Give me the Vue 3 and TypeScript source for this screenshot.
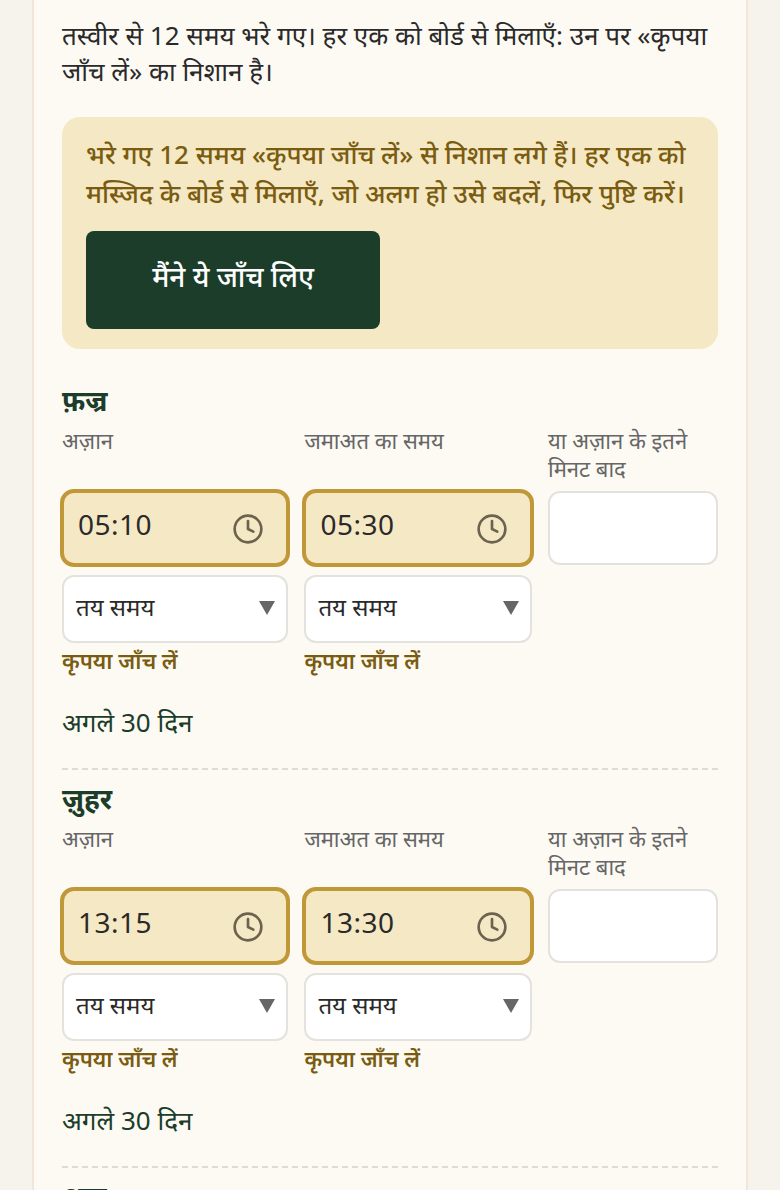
<script setup lang="ts">
interface Prayer { name: string; azan: string; jamaat: string }
const prayers: Prayer[] = [
  { name: 'फ़ज्र', azan: '05:10', jamaat: '05:30' },
  { name: 'ज़ुहर', azan: '13:15', jamaat: '13:30' },
]
</script>

<template>
  <div class="page">
    <main class="card">
      <p class="intro">तस्वीर से 12 समय भरे गए। हर एक को बोर्ड से मिलाएँ: उन पर «कृपया जाँच लें» का निशान है।</p>
      <section class="notice">
        <p class="notice-text">भरे गए 12 समय «कृपया जाँच लें» से निशान लगे हैं। हर एक को मस्जिद के बोर्ड से मिलाएँ, जो अलग हो उसे बदलें, फिर पुष्टि करें।</p>
        <button class="confirm" type="button">मैंने ये जाँच लिए</button>
      </section>

      <section v-for="p in prayers" :key="p.name" class="prayer">
        <h3 class="prayer-name">{{ p.name }}</h3>
        <div class="grid">
          <div v-for="(val, i) in [p.azan, p.jamaat]" :key="i" class="col">
            <div class="label">{{ i === 0 ? 'अज़ान' : 'जमाअत का समय' }}</div>
            <div class="time">
              <span>{{ val }}</span>
              <svg class="clock" viewBox="0 0 24 24" fill="none" stroke="currentColor" stroke-width="2" stroke-linecap="round" stroke-linejoin="round">
                <circle cx="12" cy="12" r="10" />
                <path d="M12 6v6l4 2" />
              </svg>
            </div>
            <div class="select">
              <span>तय समय</span>
              <svg class="caret" viewBox="0 0 16 14"><path d="M0 0h16L8 14z" /></svg>
            </div>
            <div class="check">कृपया जाँच लें</div>
          </div>
          <div class="col">
            <div class="label">या अज़ान के इतने मिनट बाद</div>
            <div class="minutes"></div>
          </div>
        </div>
        <div class="range">अगले 30 दिन</div>
      </section>
      <h3 class="prayer-name next">अस्र</h3>
    </main>
  </div>
</template>

<style>
html, body { margin: 0; background: #f6f2ec; }
</style>

<style scoped>
.page {
  height: 1190px;
  overflow: hidden;
  box-sizing: border-box;
  padding: 0 32px;
  font-family: "Noto Sans", "Noto Sans Devanagari", "Open Sans", sans-serif;
  color: #2a2a2a;
}
.card {
  box-sizing: border-box;
  width: 716px;
  background: #fdfaf4;
  border-left: 2px solid #f2e6d6;
  border-right: 2px solid #f2e6d6;
  padding: 17px 28px 0;
}
.intro {
  margin: 0 0 28px;
  font-size: 26px;
  line-height: 36px;
}
.notice {
  background: #f5e8c4;
  border-radius: 18px;
  padding: 18px 24px 20px;
  margin-bottom: 33px;
}
.notice-text {
  margin: 0 0 18px;
  font-size: 26px;
  line-height: 39px;
  font-weight: 500;
  color: #7a5c10;
}
.confirm {
  display: block;
  width: 294px;
  height: 98px;
  padding: 0 0 9px;
  border: 0;
  border-radius: 8px;
  background: #1b3d2a;
  color: #fff;
  font: 500 28px "Noto Sans", sans-serif;
}
.prayer {
  padding-bottom: 28px;
  border-bottom: 2px dashed #e0dcd2;
  margin-bottom: 10px;
}
.prayer-name {
  margin: 0;
  font-size: 28px;
  line-height: 36px;
  font-weight: 700;
  color: #1b3d2a;
}
.next { height: 60px; }
.grid {
  display: grid;
  grid-template-columns: 226.4px 227.6px 170px;
  column-gap: 16px;
  margin-top: 8px;
}
.label {
  font-size: 22px;
  line-height: 28px;
  height: 56px;
  color: #666;
  margin-bottom: 7px;
}
.time {
  box-sizing: border-box;
  height: 78px;
  margin: 0 -2px 8px;
  padding: 0 22px 8px 14px;
  display: flex;
  align-items: center;
  justify-content: space-between;
  background: #f5e8c4;
  border: 4px solid #c09838;
  border-radius: 14px;
  font-size: 28px;
  letter-spacing: 0.5px;
  color: #2a2a2a;
}
.clock {
  width: 32px;
  height: 32px;
  margin-top: 10px;
  color: #6b6350;
}
.select {
  box-sizing: border-box;
  height: 68px;
  padding: 0 11px 6px 12px;
  display: flex;
  align-items: center;
  justify-content: space-between;
  background: #fff;
  border: 2px solid #e4e2de;
  border-radius: 12px;
  font-size: 24px;
}
.caret {
  width: 16px;
  height: 14px;
  margin-top: 4px;
  fill: #666;
}
.check {
  margin-top: 2px;
  font-size: 22px;
  line-height: 30px;
  font-weight: 600;
  color: #7a5c10;
}
.minutes {
  box-sizing: border-box;
  height: 74px;
  margin-top: 9px;
  background: #fff;
  border: 2px solid #e4e2de;
  border-radius: 12px;
}
.range {
  margin-top: 29px;
  font-size: 26px;
  line-height: 36px;
  color: #1b3d2a;
}
</style>
